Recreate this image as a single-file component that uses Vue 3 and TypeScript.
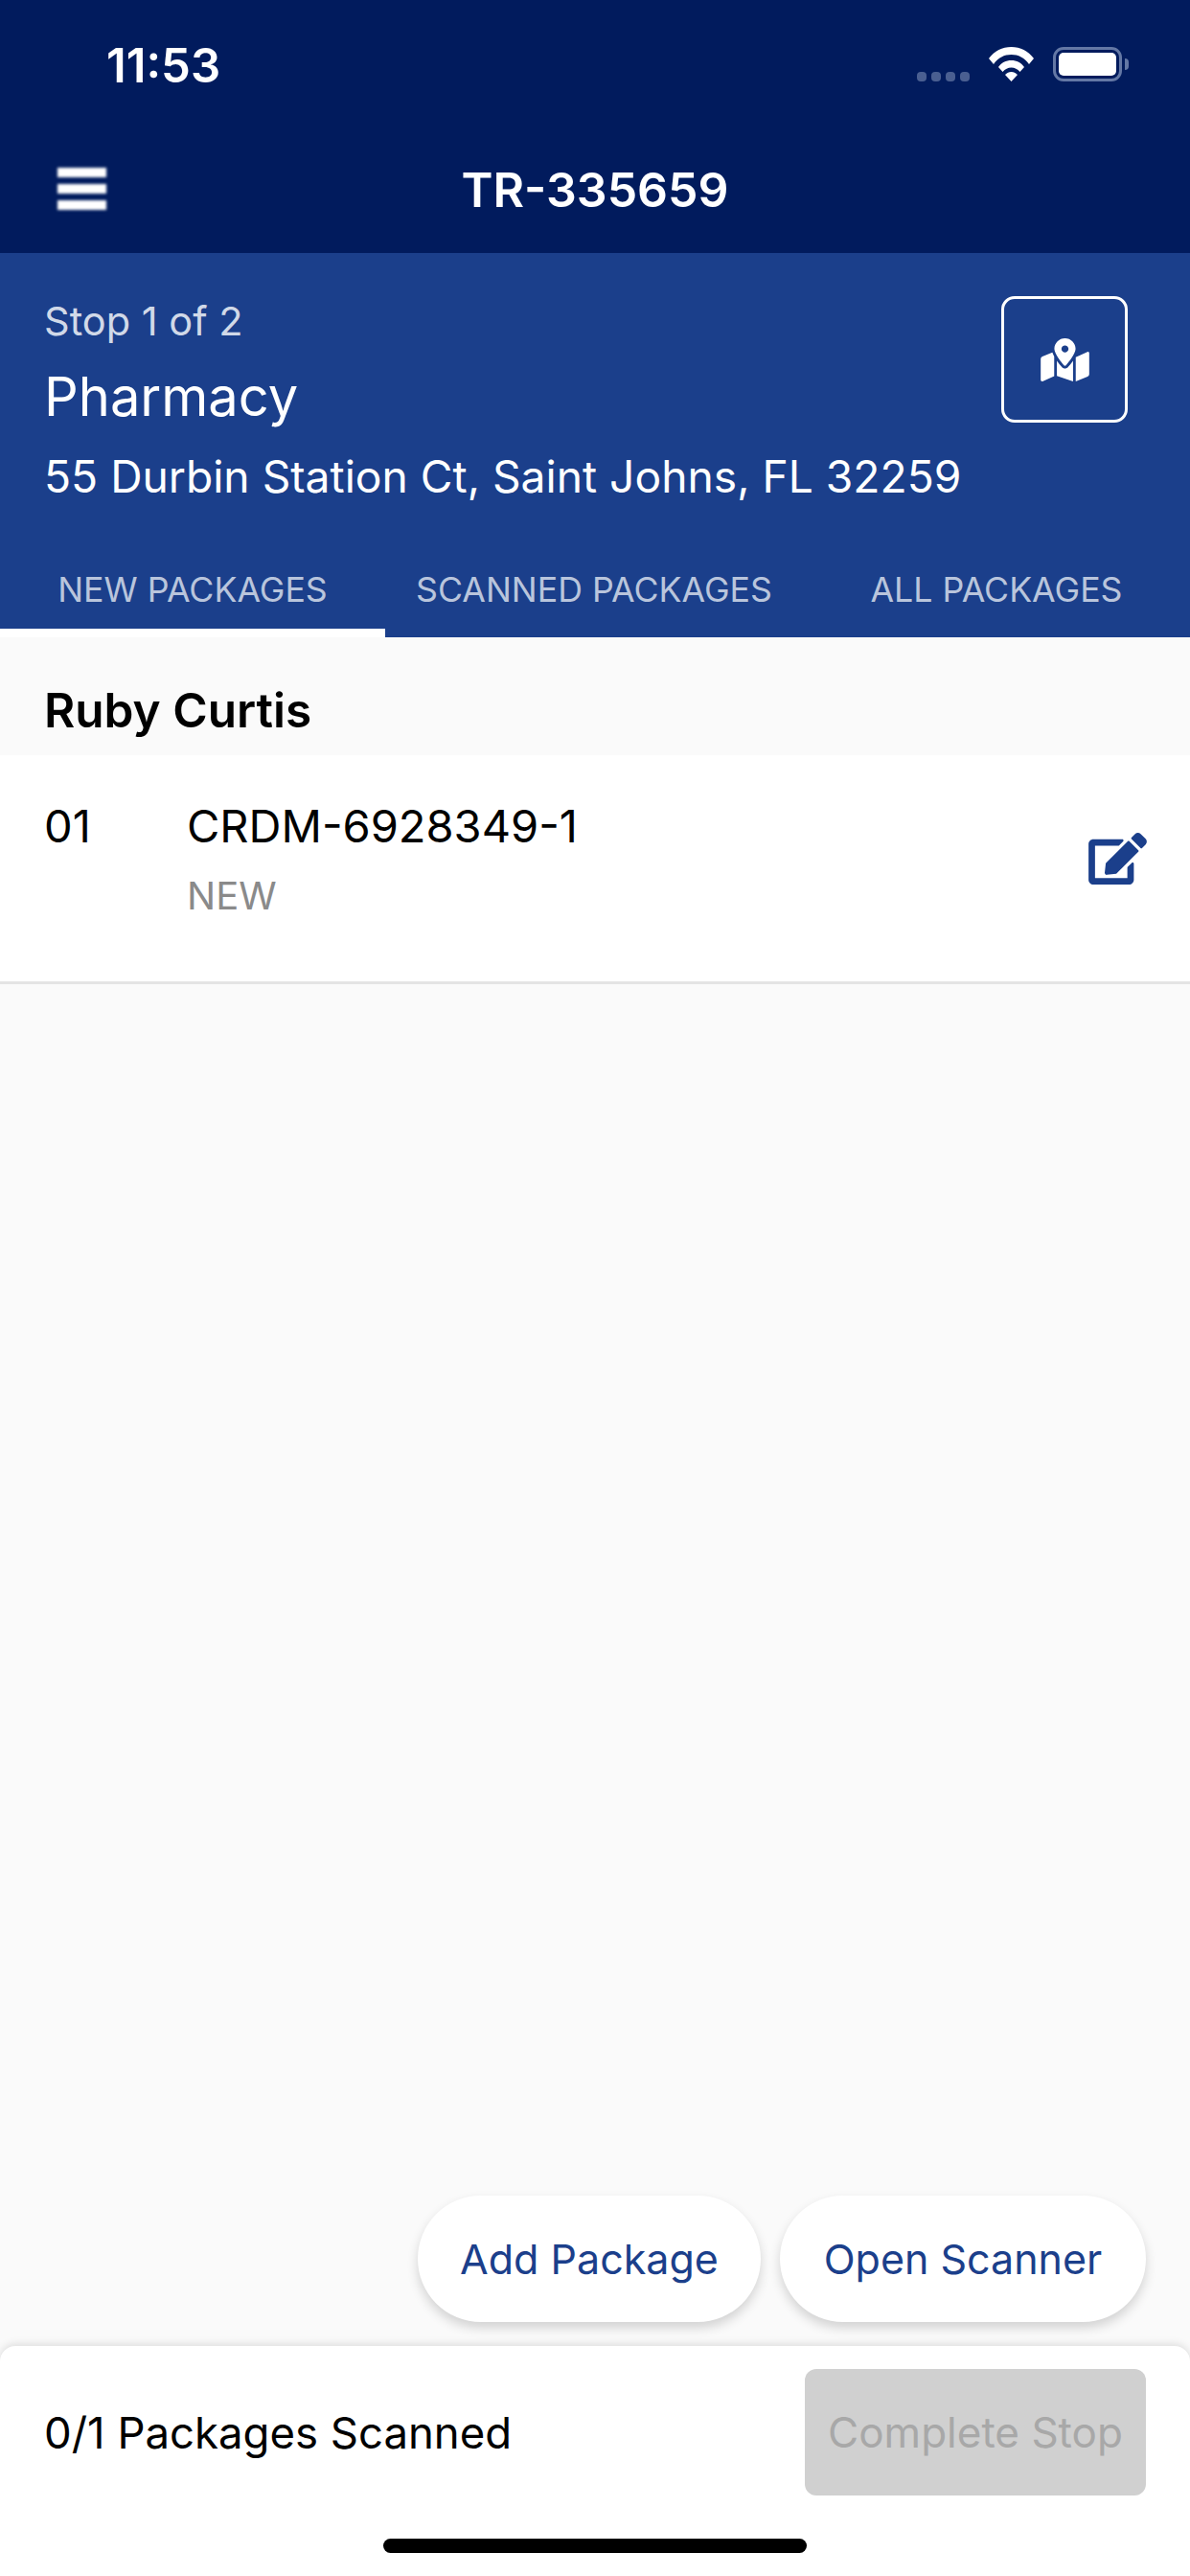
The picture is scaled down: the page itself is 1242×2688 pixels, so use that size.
<script setup lang="ts">
const tabs = ["NEW PACKAGES", "SCANNED PACKAGES", "ALL PACKAGES"];
</script>

<template>
  <div class="screen">
    <header class="top">
      <div class="status">
        <span class="time">11:53</span>
        <div class="status-icons">
          <div class="dots"><i></i><i></i><i></i><i></i></div>
          <svg class="wifi" viewBox="0 0 47 36" width="47" height="36">
            <path fill="#fff" d="M0 12C6 4 14 0 23.5 0S41 4 47 12l-5 6C37 11 31 8 23.5 8S10 11 5 18zM10 21c3-4.500 8-7 13.500-7S34 16.500 37 21l-4.500 5c-2.500-3-5.500-4.500-9-4.500s-6.500 1.500-9 4.500zM17 29c2-2 4-3 6.500-3s4.500 1 6.500 3l-6.500 7z" />
          </svg>
          <div class="battery"><div class="battery-fill"></div></div>
          <div class="battery-nub"></div>
        </div>
      </div>
      <div class="nav">
        <div class="burger"><i></i><i></i><i></i></div>
        <h1 class="nav-title">TR-335659</h1>
      </div>
    </header>

    <section class="stop">
      <div class="stop-info">
        <div class="stop-text">
          <div class="stop-count">Stop 1 of 2</div>
          <div class="stop-name">Pharmacy</div>
          <div class="stop-address">55 Durbin Station Ct, Saint Johns, FL 32259</div>
        </div>
        <button class="map-btn">
          <svg viewBox="0 0 576 512" width="51" height="45">
            <path fill="#fff" d="M288 0c-69.590 0-126 56.410-126 126 0 56.260 82.350 158.800 113.900 196.020 6.390 7.540 17.820 7.540 24.200 0C331.650 284.800 414 182.260 414 126 414 56.410 357.590 0 288 0zm0 168c-23.200 0-42-18.800-42-42s18.800-42 42-42 42 18.800 42 42-18.800 42-42 42zM20.120 215.950A32.006 32.006 0 0 0 0 245.660v250.320c0 11.320 11.430 19.060 21.940 14.860L160 448V214.920c-8.840-15.980-16.070-31.540-21.250-46.420L20.120 215.950zM288 359.670c-14.070 0-27.380-6.180-36.510-16.960-19.660-23.200-40.570-49.620-59.490-76.720v182l192 64V266c-18.920 27.090-39.820 53.520-59.490 76.720-9.130 10.770-22.440 16.950-36.510 16.950zm266.060-198.510L416 224v288l139.880-55.950A31.996 31.996 0 0 0 576 426.340V176.020c0-11.320-11.430-19.060-21.940-14.860z" />
          </svg>
        </button>
      </div>
      <nav class="tabs">
        <div v-for="(t, i) in tabs" :key="t" class="tab" :class="{ active: i === 0 }">{{ t }}</div>
      </nav>
    </section>

    <main class="content">
      <div class="group-title">Ruby Curtis</div>
      <div class="row">
        <span class="row-num">01</span>
        <div class="row-body">
          <div class="row-code">CRDM-6928349-1</div>
          <div class="row-state">NEW</div>
        </div>
        <svg class="edit" viewBox="0 0 576 512" width="61" height="54">
          <path fill="#1b3f8b" d="M402.600 83.200l90.200 90.200c3.800 3.800 3.800 10 0 13.800L274.400 405.600l-92.800 10.300c-12.400 1.400-22.900-9.100-21.500-21.500l10.300-92.800L388.800 83.200c3.800-3.800 10-3.800 13.800 0zm162-22.900l-48.800-48.800c-15.200-15.200-39.900-15.200-55.200 0l-35.400 35.400c-3.800 3.800-3.800 10 0 13.800l90.200 90.200c3.800 3.800 10 3.800 13.800 0l35.400-35.400c15.200-15.300 15.200-40 0-55.200zM384 346.200V448H64V128h229.800c3.200 0 6.200-1.300 8.500-3.500l40-40c7.600-7.600 2.200-20.500-8.500-20.500H48C21.500 64 0 85.500 0 112v352c0 26.500 21.500 48 48 48h352c26.500 0 48-21.500 48-48V306.200c0-10.700-12.900-16-20.500-8.500l-40 40c-2.200 2.300-3.500 5.300-3.500 8.500z" />
        </svg>
      </div>
      <div class="actions">
        <button class="pill add">Add Package</button>
        <button class="pill scan">Open Scanner</button>
      </div>
    </main>

    <footer class="bottom">
      <div class="bottom-row">
        <span class="scanned">0/1 Packages Scanned</span>
        <button class="complete" disabled>Complete Stop</button>
      </div>
      <div class="home"></div>
    </footer>
  </div>
</template>

<style>
html,
body {
  margin: 0;
  background: #fafafa;
}
</style>

<style scoped>
.screen {
  width: 1242px;
  height: 2688px;
  display: flex;
  flex-direction: column;
  overflow: hidden;
  background: #fafafa;
  font-family: Inter, "Noto Sans", sans-serif;
  color: #000;
}

.top {
  height: 264px;
  flex: none;
  background: #011b5d;
  color: #fff;
}

.status {
  height: 132px;
  display: flex;
  align-items: flex-start;
  justify-content: space-between;
  padding: 49px 64px 0 111px;
  box-sizing: border-box;
}

.time {
  font-size: 49px;
  font-weight: 600;
  line-height: 40px;
}

.status-icons {
  display: flex;
  align-items: flex-start;
}

.dots {
  display: flex;
  gap: 5px;
  margin-top: 26px;
  margin-right: 20px;
}

.dots i {
  width: 10px;
  height: 10px;
  border-radius: 4px;
  background: #4a5f91;
}

.battery {
  width: 72px;
  height: 36px;
  margin-left: 20px;
  box-sizing: border-box;
  border: 3px solid #6478a5;
  border-radius: 11px;
  padding: 3px;
}

.battery-fill {
  height: 100%;
  background: #fff;
  border-radius: 5px;
}

.battery-nub {
  width: 4px;
  height: 12px;
  margin: 12px 0 0 3px;
  background: #6478a5;
  border-radius: 0 4px 4px 0;
}

.nav {
  height: 132px;
  position: relative;
  display: flex;
  align-items: flex-start;
  justify-content: center;
}

.burger {
  position: absolute;
  left: 60px;
  top: 43px;
  width: 51px;
  display: flex;
  flex-direction: column;
  gap: 7px;
}

.burger i {
  height: 10px;
  background: #fff;
  filter: blur(1.5px);
}

.nav-title {
  margin: 37px 0 0;
  font-size: 50px;
  line-height: 58px;
  font-weight: 600;
}

.stop {
  height: 401px;
  flex: none;
  background: #1b3f8b;
  color: #fff;
  display: flex;
  flex-direction: column;
}

.stop-info {
  flex: 1;
  display: flex;
  justify-content: space-between;
  padding: 0 65px 0 46px;
}

.stop-count {
  margin-top: 46px;
  font-size: 41.500px;
  line-height: 50px;
  color: #d1d9e8;
}

.stop-name {
  margin-top: 19px;
  font-size: 56px;
  line-height: 70px;
}

.stop-address {
  margin-top: 20px;
  font-size: 46.200px;
  line-height: 56px;
}

.map-btn {
  width: 132px;
  height: 132px;
  margin-top: 45px;
  padding: 0;
  box-sizing: border-box;
  border: 3px solid #fff;
  border-radius: 14px;
  background: transparent;
  display: flex;
  align-items: center;
  justify-content: center;
}

.tabs {
  height: 70px;
  flex: none;
  display: grid;
  grid-template-columns: 402px 436px 404px;
}

.tab {
  box-sizing: border-box;
  text-align: center;
  font-size: 35.700px;
  line-height: 40px;
  color: #b9c5dc;
}

.tab.active {
  border-bottom: 9px solid #fff;
}

.content {
  flex: 1;
  display: flex;
  flex-direction: column;
}

.group-title {
  height: 123px;
  box-sizing: border-box;
  padding: 47px 46px 0;
  font-size: 49.500px;
  line-height: 58px;
  font-weight: 600;
}

.row {
  height: 239px;
  box-sizing: border-box;
  flex: none;
  display: flex;
  align-items: flex-start;
  background: #fff;
  border-bottom: 3px solid #e4e4e4;
  padding: 46px 45px 0 46px;
}

.row-num {
  width: 149px;
  font-size: 47px;
  line-height: 56px;
}

.row-body {
  flex: 1;
}

.row-code {
  font-size: 47px;
  line-height: 56px;
}

.row-state {
  margin-top: 22px;
  font-size: 40px;
  line-height: 46px;
  color: #8a8a8a;
}

.edit {
  margin-top: 35px;
}

.actions {
  margin-top: auto;
  margin-bottom: 25px;
  padding-right: 46px;
  display: flex;
  justify-content: flex-end;
  gap: 20px;
}

.pill {
  height: 132px;
  padding: 0;
  border: none;
  border-radius: 66px;
  background: #fff;
  color: #1b3f8b;
  font-family: inherit;
  font-size: 43px;
  box-shadow: 0 6px 12px rgba(0, 0, 0, 0.16);
}

.add {
  width: 358px;
}

.scan {
  width: 382px;
}

.bottom {
  height: 240px;
  flex: none;
  background: #fff;
  border-radius: 16px 16px 0 0;
  box-shadow: 0 -2px 8px rgba(0, 0, 0, 0.12);
  display: flex;
  flex-direction: column;
}

.bottom-row {
  margin-top: 24px;
  padding: 0 46px 0 46px;
  display: flex;
  align-items: center;
  justify-content: space-between;
}

.scanned {
  font-size: 45.500px;
}

.complete {
  width: 356px;
  height: 132px;
  padding: 0;
  border: none;
  border-radius: 12px;
  background: #d0d0d0;
  color: #a8a8a8;
  font-family: inherit;
  font-size: 44px;
}

.home {
  width: 442px;
  height: 15px;
  margin: 45px auto 0;
  border-radius: 8px;
  background: #000;
}
</style>
